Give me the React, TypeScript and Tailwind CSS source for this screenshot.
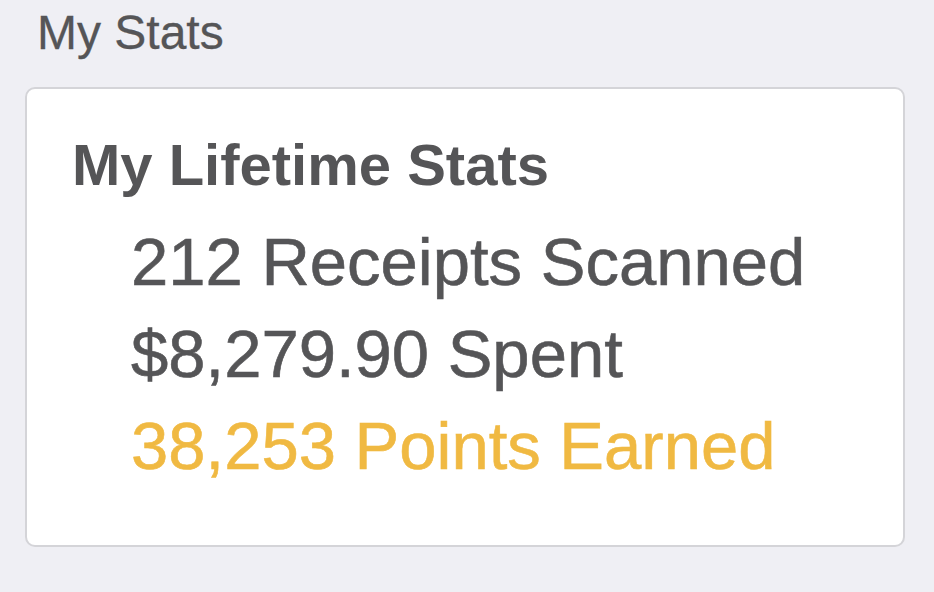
export default function App() {
  return (
    <div className="min-h-[592px] w-[934px] bg-[#efeff4] font-['Liberation_Sans',Arial,sans-serif] text-[#555557]">
      <h2 className="pl-[37px] pt-[9px] text-[48px] leading-[48px] [-webkit-text-stroke:0.3px]">My Stats</h2>
      <div className="ml-[25px] mt-[30px] h-[460px] w-[880px] rounded-[10px] border-2 border-[#d4d4d8] bg-white pl-[45px] pt-[47px]">
        <h3 className="text-[58px] font-bold leading-[58px]">My Lifetime Stats</h3>
        <ul className="mt-[22px] pl-[59px] text-[67px] leading-[92px] [-webkit-text-stroke:0.6px]">
          <li>212 Receipts Scanned</li>
          <li>$8,279.90 Spent</li>
          <li className="text-[#f0b942]">38,253 Points Earned</li>
        </ul>
      </div>
    </div>
  );
}
